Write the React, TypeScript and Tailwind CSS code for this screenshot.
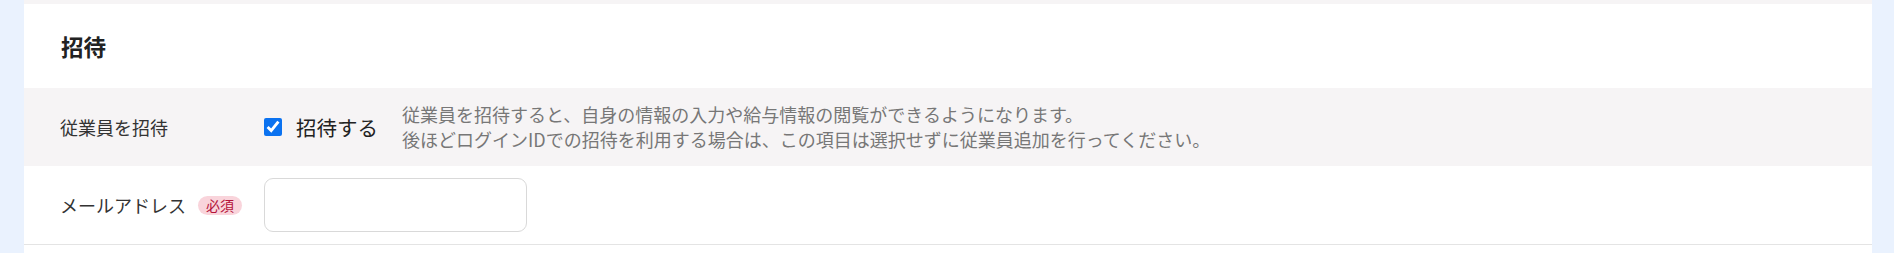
import React from "react";

// 招待セクション
export default function App() {
  return (
    <div
      className="min-h-[253px] bg-[#eaf2fe] px-[24px] pr-[22px]"
      style={{ fontFamily: '"Noto Sans CJK JP", "Noto Sans", sans-serif' }}
    >
      <div className="bg-white">
        <div className="h-[4px] bg-[#f6f4f5]" />
        {/* 見出し */}
        <div className="flex h-[84px] items-center pl-[37px]">
          <h2 className="text-[22.5px] font-bold leading-none text-[#222]">招待</h2>
        </div>
        {/* 従業員を招待 */}
        <div className="flex h-[78px] items-center bg-[#f6f4f5] pl-[36px]">
          <div className="w-[204px] text-[18px] text-[#333]">従業員を招待</div>
          <label className="flex items-center">
            <input type="checkbox" defaultChecked className="m-0 h-[18px] w-[18px] accent-[#0b72f0]" />
            <span className="ml-[14px] text-[20.5px] leading-none text-[#222]">招待する</span>
          </label>
          <div className="ml-[24px] text-[18px] leading-[25px] text-[#777]">
            <p>従業員を招待すると、自身の情報の入力や給与情報の閲覧ができるようになります。</p>
            <p>後ほどログインIDでの招待を利用する場合は、この項目は選択せずに従業員追加を行ってください。</p>
          </div>
        </div>
        {/* メールアドレス */}
        <div className="flex h-[79px] items-center border-b border-[#e4e4e4] pl-[36px]">
          <div className="flex w-[204px] items-center">
            <span className="text-[18px] text-[#333]">メールアドレス</span>
            <span className="ml-[12px] rounded-full bg-[#f9d4db] px-[8px] text-[14px] leading-[19px] text-[#b4123a]">
              必須
            </span>
          </div>
          <input
            type="text"
            className="h-[54px] w-[263px] rounded-[9px] border border-[#d9d9d9] bg-white px-3 text-[16px] outline-none"
          />
        </div>
        <div className="h-[8px]" />
      </div>
    </div>
  );
}
